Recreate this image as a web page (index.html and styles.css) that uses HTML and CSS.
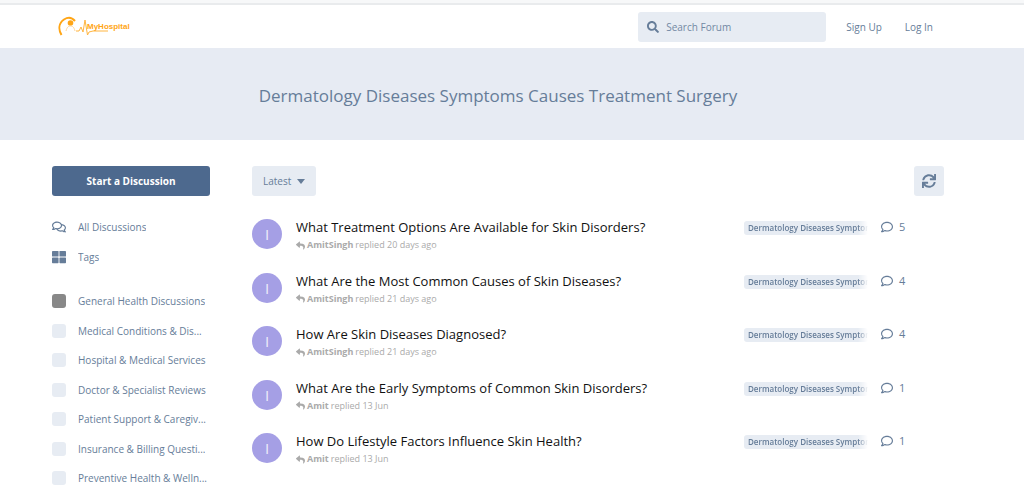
FILE: index.html
```html
<!DOCTYPE html>
<html lang="en">
<head>
    <meta charset="UTF-8">
    <meta name="viewport" content="width=device-width, initial-scale=1.0">
    <title>Dermatology Diseases Symptoms Causes Treatment Surgery - MyHospital</title>
    <link rel="stylesheet" href="styles.css">
</head>
<body>
    <svg class="sprite" aria-hidden="true">
        <symbol id="reply" viewBox="0 0 512 512"><path d="M8.309 189.836L184.313 37.851C199.719 24.546 224 35.347 224 56.015v80.053c160.629 1.839 288 34.032 288 186.258 0 61.441-39.581 122.309-83.333 154.132-13.653 9.931-33.111-2.533-28.077-18.631 45.344-145.012-21.507-183.51-176.59-185.742V360c0 20.7-24.3 31.453-39.687 18.164l-176.004-152c-11.071-9.562-11.086-26.753 0-36.328z"/></symbol>
        <symbol id="comment" viewBox="0 0 512 512"><path d="M256 32C114.6 32 0 125.1 0 240c0 47.6 19.9 91.2 52.9 126.3C38 405.7 7 439.1 6.5 439.5c-6.6 7-8.4 17.2-4.6 26S14.4 480 24 480c61.5 0 110-25.7 139.1-46.3C192 442.8 223.2 448 256 448c141.4 0 256-93.1 256-208S397.4 32 256 32zm0 368c-26.7 0-53.1-4.1-78.4-12.1l-22.7-7.2-19.5 13.8c-14.3 10.1-33.9 21.4-57.5 29 7.3-12.1 14.4-25.7 19.9-40.2l10.6-28.1-20.6-21.8C69.7 314.1 48 282.2 48 240c0-88.2 93.3-160 208-160s208 71.8 208 160-93.3 160-208 160z"/></symbol>
    </svg>

    <div class="topbar"></div>
    <header class="header">
        <a class="logo" href="#" aria-label="MyHospital">
            <svg width="74" height="22" viewBox="0 0 74 22">
                <path d="M3.500 19C0 13 1 7 6 3.500C10 1 14 1.500 17 5" fill="none" stroke="#ffa515" stroke-width="2"/>
                <circle cx="12.500" cy="7" r="2.800" fill="#ffa515"/>
                <path d="M8 15C9 11 10.500 10 12.500 10S16 11 17 15" fill="none" stroke="#ffd596" stroke-width="1"/>
                <path d="M18 15h3l2-4 2 5 2-12 2.500 15 1.500-3 4-1h15" fill="none" stroke="#ffb540" stroke-width="1"/>
                <text x="29" y="13" class="logo-text">MyHospital</text>
            </svg>
        </a>
        <label class="search">
            <svg class="icon" viewBox="0 0 512 512"><path d="M505 442.700L405.300 343c-4.500-4.500-10.600-7-17-7H372c27.600-35.300 44-79.700 44-128C416 93.100 322.900 0 208 0S0 93.100 0 208s93.100 208 208 208c48.300 0 92.700-16.400 128-44v16.300c0 6.400 2.500 12.500 7 17l99.700 99.700c9.400 9.400 24.600 9.400 33.900 0l28.300-28.300c9.400-9.400 9.400-24.600.1-34zM208 336c-70.700 0-128-57.200-128-128 0-70.700 57.200-128 128-128 70.700 0 128 57.200 128 128 0 70.700-57.200 128-128 128z"/></svg>
            <input type="search" placeholder="Search Forum" aria-label="Search Forum">
        </label>
        <nav class="account">
            <a href="#">Sign Up</a>
            <a href="#">Log In</a>
        </nav>
    </header>

    <div class="hero">
        <h1>Dermatology Diseases Symptoms Causes Treatment Surgery</h1>
    </div>

    <div class="container">
        <aside class="sidebar">
            <button class="btn-primary" type="button">Start a Discussion</button>
            <ul class="links">
                <li><a href="#">
                    <svg class="icon" viewBox="0 0 576 512"><path d="M532 386.200c27.500-27.100 44-61.100 44-98.200 0-80-76.500-146.100-176.200-157.900C368.300 72.500 294.300 32 208 32 93.100 32 0 103.600 0 192c0 37 16.500 71 44 98.200-15.300 30.700-37.300 54.500-37.700 54.900-6.300 6.700-8.100 16.500-4.400 25 3.600 8.500 12 14 21.200 14 53.500 0 96.700-20.200 125.200-38.800 9.200 2.100 18.700 3.700 28.400 4.900C208.100 407.600 281.800 448 368 448c20.800 0 40.800-2.400 59.800-6.800C456.300 459.700 499.400 480 553 480c9.200 0 17.500-5.500 21.200-14 3.600-8.500 1.900-18.300-4.400-25-.4-.3-22.500-24.100-37.800-54.800zm-392.800-92.300L122.100 305c-14.100 9.100-28.500 16.300-43.100 21.400 2.700-4.700 5.400-9.700 8-14.800l15.500-31.100L77.700 256C64.200 242.600 48 220.700 48 192c0-60.700 73.300-112 160-112s160 51.300 160 112-73.300 112-160 112c-16.500 0-33-1.900-49-5.600l-19.800-4.500zM498.300 352l-24.700 24.400 15.500 31.100c2.600 5.100 5.300 10.100 8 14.800-14.600-5.100-29-12.300-43.100-21.400l-17.100-11.100-19.900 4.600c-16 3.700-32.500 5.600-49 5.600-54 0-102.200-20.100-131.300-49.700C338 339.500 416 272.900 416 192c0-3.400-.4-6.700-.7-10C479.700 196.500 528 238.800 528 288c0 28.700-16.200 50.600-29.700 64z"/></svg>
                    <span>All Discussions</span></a></li>
                <li><a href="#">
                    <svg class="icon" viewBox="0 0 512 512"><rect x="0" y="32" width="240" height="208" rx="24"/><rect x="272" y="32" width="240" height="208" rx="24"/><rect x="0" y="272" width="240" height="208" rx="24"/><rect x="272" y="272" width="240" height="208" rx="24"/></svg>
                    <span>Tags</span></a></li>
            </ul>
            <ul class="tags">
                <li><a href="#"><i class="swatch swatch-dark"></i><span>General Health Discussions</span></a></li>
                <li><a href="#"><i class="swatch"></i><span>Medical Conditions &amp; Dis...</span></a></li>
                <li><a href="#"><i class="swatch"></i><span>Hospital &amp; Medical Services</span></a></li>
                <li><a href="#"><i class="swatch"></i><span>Doctor &amp; Specialist Reviews</span></a></li>
                <li><a href="#"><i class="swatch"></i><span>Patient Support &amp; Caregiv...</span></a></li>
                <li><a href="#"><i class="swatch"></i><span>Insurance &amp; Billing Questi...</span></a></li>
                <li><a href="#"><i class="swatch"></i><span>Preventive Health &amp; Welln...</span></a></li>
            </ul>
        </aside>

        <main class="content">
            <div class="toolbar">
                <button class="btn sort" type="button">Latest <span class="caret"></span></button>
                <button class="btn refresh" type="button" aria-label="Refresh">
                    <svg viewBox="0 0 512 512"><path d="M440.650 12.570l4 82.770A247.160 247.160 0 0 0 255.830 8C134.730 8 33.910 94.920 12.290 209.820A12 12 0 0 0 24.090 224h49.050a12 12 0 0 0 11.670-9.260 175.910 175.910 0 0 1 317-56.940l-101.460-4.860a12 12 0 0 0-12.570 12v47.410a12 12 0 0 0 12 12H500a12 12 0 0 0 12-12V12a12 12 0 0 0-12-12h-47.370a12 12 0 0 0-11.980 12.570zM255.830 432a175.610 175.610 0 0 1-146-77.800l101.800 4.870a12 12 0 0 0 12.570-12v-47.400a12 12 0 0 0-12-12H12a12 12 0 0 0-12 12V500a12 12 0 0 0 12 12h47.350a12 12 0 0 0 12-12.600l-4.150-82.570A247.170 247.170 0 0 0 255.830 504c121.110 0 221.930-86.920 243.550-201.820a12 12 0 0 0-11.800-14.180h-49.050a12 12 0 0 0-11.670 9.260A175.860 175.860 0 0 1 255.830 432z"/></svg>
                </button>
            </div>
            <ul class="discussions">
                <li>
                    <span class="avatar">I</span>
                    <div class="main">
                        <h3><a href="#">What Treatment Options Are Available for Skin Disorders?</a></h3>
                        <p><svg><use href="#reply"/></svg><b>AmitSingh</b> replied 20 days ago</p>
                    </div>
                    <div class="labels"><span>Dermatology Diseases Symptoms</span></div>
                    <div class="count"><svg><use href="#comment"/></svg>5</div>
                </li>
                <li>
                    <span class="avatar">I</span>
                    <div class="main">
                        <h3><a href="#">What Are the Most Common Causes of Skin Diseases?</a></h3>
                        <p><svg><use href="#reply"/></svg><b>AmitSingh</b> replied 21 days ago</p>
                    </div>
                    <div class="labels"><span>Dermatology Diseases Symptoms</span></div>
                    <div class="count"><svg><use href="#comment"/></svg>4</div>
                </li>
                <li>
                    <span class="avatar">I</span>
                    <div class="main">
                        <h3><a href="#">How Are Skin Diseases Diagnosed?</a></h3>
                        <p><svg><use href="#reply"/></svg><b>AmitSingh</b> replied 21 days ago</p>
                    </div>
                    <div class="labels"><span>Dermatology Diseases Symptoms</span></div>
                    <div class="count"><svg><use href="#comment"/></svg>4</div>
                </li>
                <li>
                    <span class="avatar">I</span>
                    <div class="main">
                        <h3><a href="#">What Are the Early Symptoms of Common Skin Disorders?</a></h3>
                        <p><svg><use href="#reply"/></svg><b>Amit</b> replied 13 Jun</p>
                    </div>
                    <div class="labels"><span>Dermatology Diseases Symptoms</span></div>
                    <div class="count"><svg><use href="#comment"/></svg>1</div>
                </li>
                <li>
                    <span class="avatar">I</span>
                    <div class="main">
                        <h3><a href="#">How Do Lifestyle Factors Influence Skin Health?</a></h3>
                        <p><svg><use href="#reply"/></svg><b>Amit</b> replied 13 Jun</p>
                    </div>
                    <div class="labels"><span>Dermatology Diseases Symptoms</span></div>
                    <div class="count"><svg><use href="#comment"/></svg>1</div>
                </li>
            </ul>
        </main>
    </div>
</body>
</html>
```
FILE: styles.css
```css
* {
    box-sizing: border-box;
}

body {
    margin: 0;
    background: #fff;
    color: #667d99;
    font-family: "Open Sans", "Noto Sans", sans-serif;
    font-size: 10px;
    line-height: 16px;
}

a {
    color: inherit;
    text-decoration: none;
}

ul {
    list-style: none;
    margin: 0;
    padding: 0;
}

button, input {
    font: inherit;
    color: inherit;
    border: 0;
}

svg {
    fill: currentColor;
    flex-shrink: 0;
}

.sprite {
    display: none;
}

.topbar {
    height: 5px;
    background: #f7f8f9;
    border-bottom: 2px solid #e9ebed;
}

.header {
    display: flex;
    align-items: center;
    height: 43px;
    padding: 0 91px 0 58px;
}

.logo {
    display: flex;
    margin-right: auto;
}

.logo-text {
    font-family: "Liberation Sans", sans-serif;
    font-size: 8px;
    font-weight: 700;
    fill: #ffa515;
}

.search {
    display: flex;
    align-items: center;
    gap: 7px;
    width: 188px;
    height: 30px;
    padding: 0 9px;
    background: #e7ecf3;
    border-radius: 3px;
}

.search .icon {
    width: 12px;
    height: 12px;
}

.search input {
    flex: 1;
    min-width: 0;
    padding: 0;
    background: transparent;
    outline: none;
}

.search input::placeholder {
    color: #7288a3;
}

.account {
    display: flex;
    gap: 23px;
    margin-left: 20px;
}

.hero {
    padding: 36px 80px 32px 52px;
    background: #e7ebf3;
    text-align: center;
}

.hero h1 {
    margin: 0;
    font-size: 17px;
    font-weight: 400;
    line-height: 24px;
}

.container {
    display: flex;
    gap: 42px;
    padding: 26px 80px 0 52px;
}

.sidebar {
    width: 158px;
    flex-shrink: 0;
}

.btn-primary {
    width: 100%;
    height: 30px;
    background: #4d698e;
    border-radius: 3px;
    color: #fff;
    font-weight: 700;
}

.links {
    margin: 16px 0 15px;
}

.links a, .tags a {
    display: flex;
    align-items: center;
    gap: 12px;
    height: 30px;
}

.links .icon {
    width: 14px;
    height: 14px;
}

.links span, .tags span {
    overflow: hidden;
    white-space: nowrap;
    text-overflow: ellipsis;
}

.tags {
    display: grid;
    grid-template-columns: minmax(0, 1fr);
    grid-auto-rows: 1fr;
    min-height: 207px;
}

.tags a {
    height: 28px;
}

.swatch {
    width: 14px;
    height: 14px;
    flex-shrink: 0;
    background: #e7ecf3;
    border-radius: 3px;
}

.swatch-dark {
    background: #888;
}

.content {
    flex: 1;
    min-width: 0;
}

.toolbar {
    display: flex;
    justify-content: space-between;
}

.btn {
    display: flex;
    align-items: center;
    justify-content: center;
    height: 30px;
    padding: 0 11px;
    background: #e7ecf3;
    border-radius: 3px;
}

.caret {
    margin-left: 6px;
    border: 4px solid transparent;
    border-top: 5px solid #667d99;
    border-bottom: 0;
}

.refresh {
    width: 30px;
    padding: 0;
}

.refresh svg {
    width: 14px;
    height: 14px;
}

.discussions {
    display: grid;
    grid-auto-rows: 1fr;
    min-height: 268px;
    margin-top: 17px;
}

.discussions li {
    display: flex;
    align-items: flex-start;
    padding-top: 6px;
}

.avatar {
    width: 30px;
    height: 30px;
    margin-right: 14px;
    background: #a59fe5;
    border-radius: 50%;
    color: #edebfa;
    font-size: 15px;
    line-height: 30px;
    text-align: center;
}

.main {
    flex: 1;
    min-width: 0;
}

.main h3 {
    margin: 0;
    color: #111;
    font-size: 13px;
    font-weight: 400;
    line-height: 16px;
}

.main p {
    display: flex;
    align-items: center;
    gap: 2px;
    margin: 4px 0 0;
    color: #aaa;
    font-size: 9px;
    line-height: 12px;
}

.main svg {
    width: 9px;
    height: 9px;
}

.labels {
    width: 124px;
    margin-top: 2px;
    overflow: hidden;
    white-space: nowrap;
    font-size: 8px;
    font-weight: 600;
    line-height: 14px;
    mask-image: linear-gradient(to right, #000 calc(100% - 10px), transparent);
}

.labels span {
    display: block;
    padding-left: 4px;
    background: #e7ecf3;
    border-radius: 3px;
}

.count {
    display: flex;
    align-items: center;
    gap: 6px;
    width: 76px;
    padding-left: 13px;
    font-size: 11px;
}

.count svg {
    width: 12px;
    height: 12px;
}
```
